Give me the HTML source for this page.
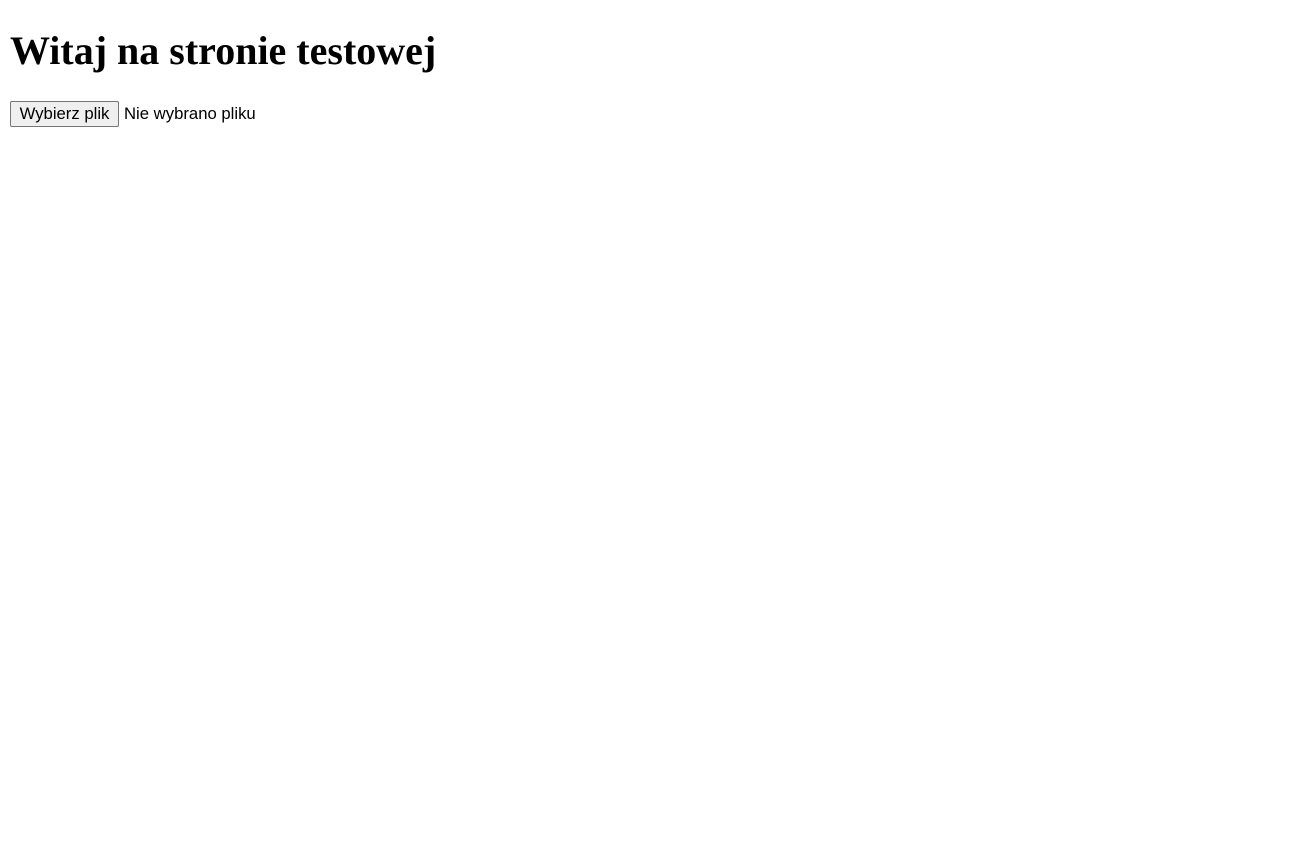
<!DOCTYPE html>
<html><head><meta charset="utf-8"><style>
body{margin:0;background:#fff;font-family:"Liberation Sans",sans-serif;}
h1{position:absolute;left:10px;top:26px;margin:0;font-family:"Liberation Serif",serif;font-size:40px;font-weight:bold;line-height:50px;color:#000;}
.row{position:absolute;left:10px;top:101px;height:26px;display:flex;align-items:center;font-size:16.7px;color:#000;}
.btn{box-sizing:border-box;height:26px;width:109px;border:1px solid #767676;border-radius:2px;background:#efefef;font-size:16.7px;display:flex;align-items:center;justify-content:center;}
.txt{margin-left:5px;}
</style></head><body>
<h1>Witaj na stronie testowej</h1>
<div class="row"><div class="btn">Wybierz plik</div><span class="txt">Nie wybrano pliku</span></div>
</body></html>
